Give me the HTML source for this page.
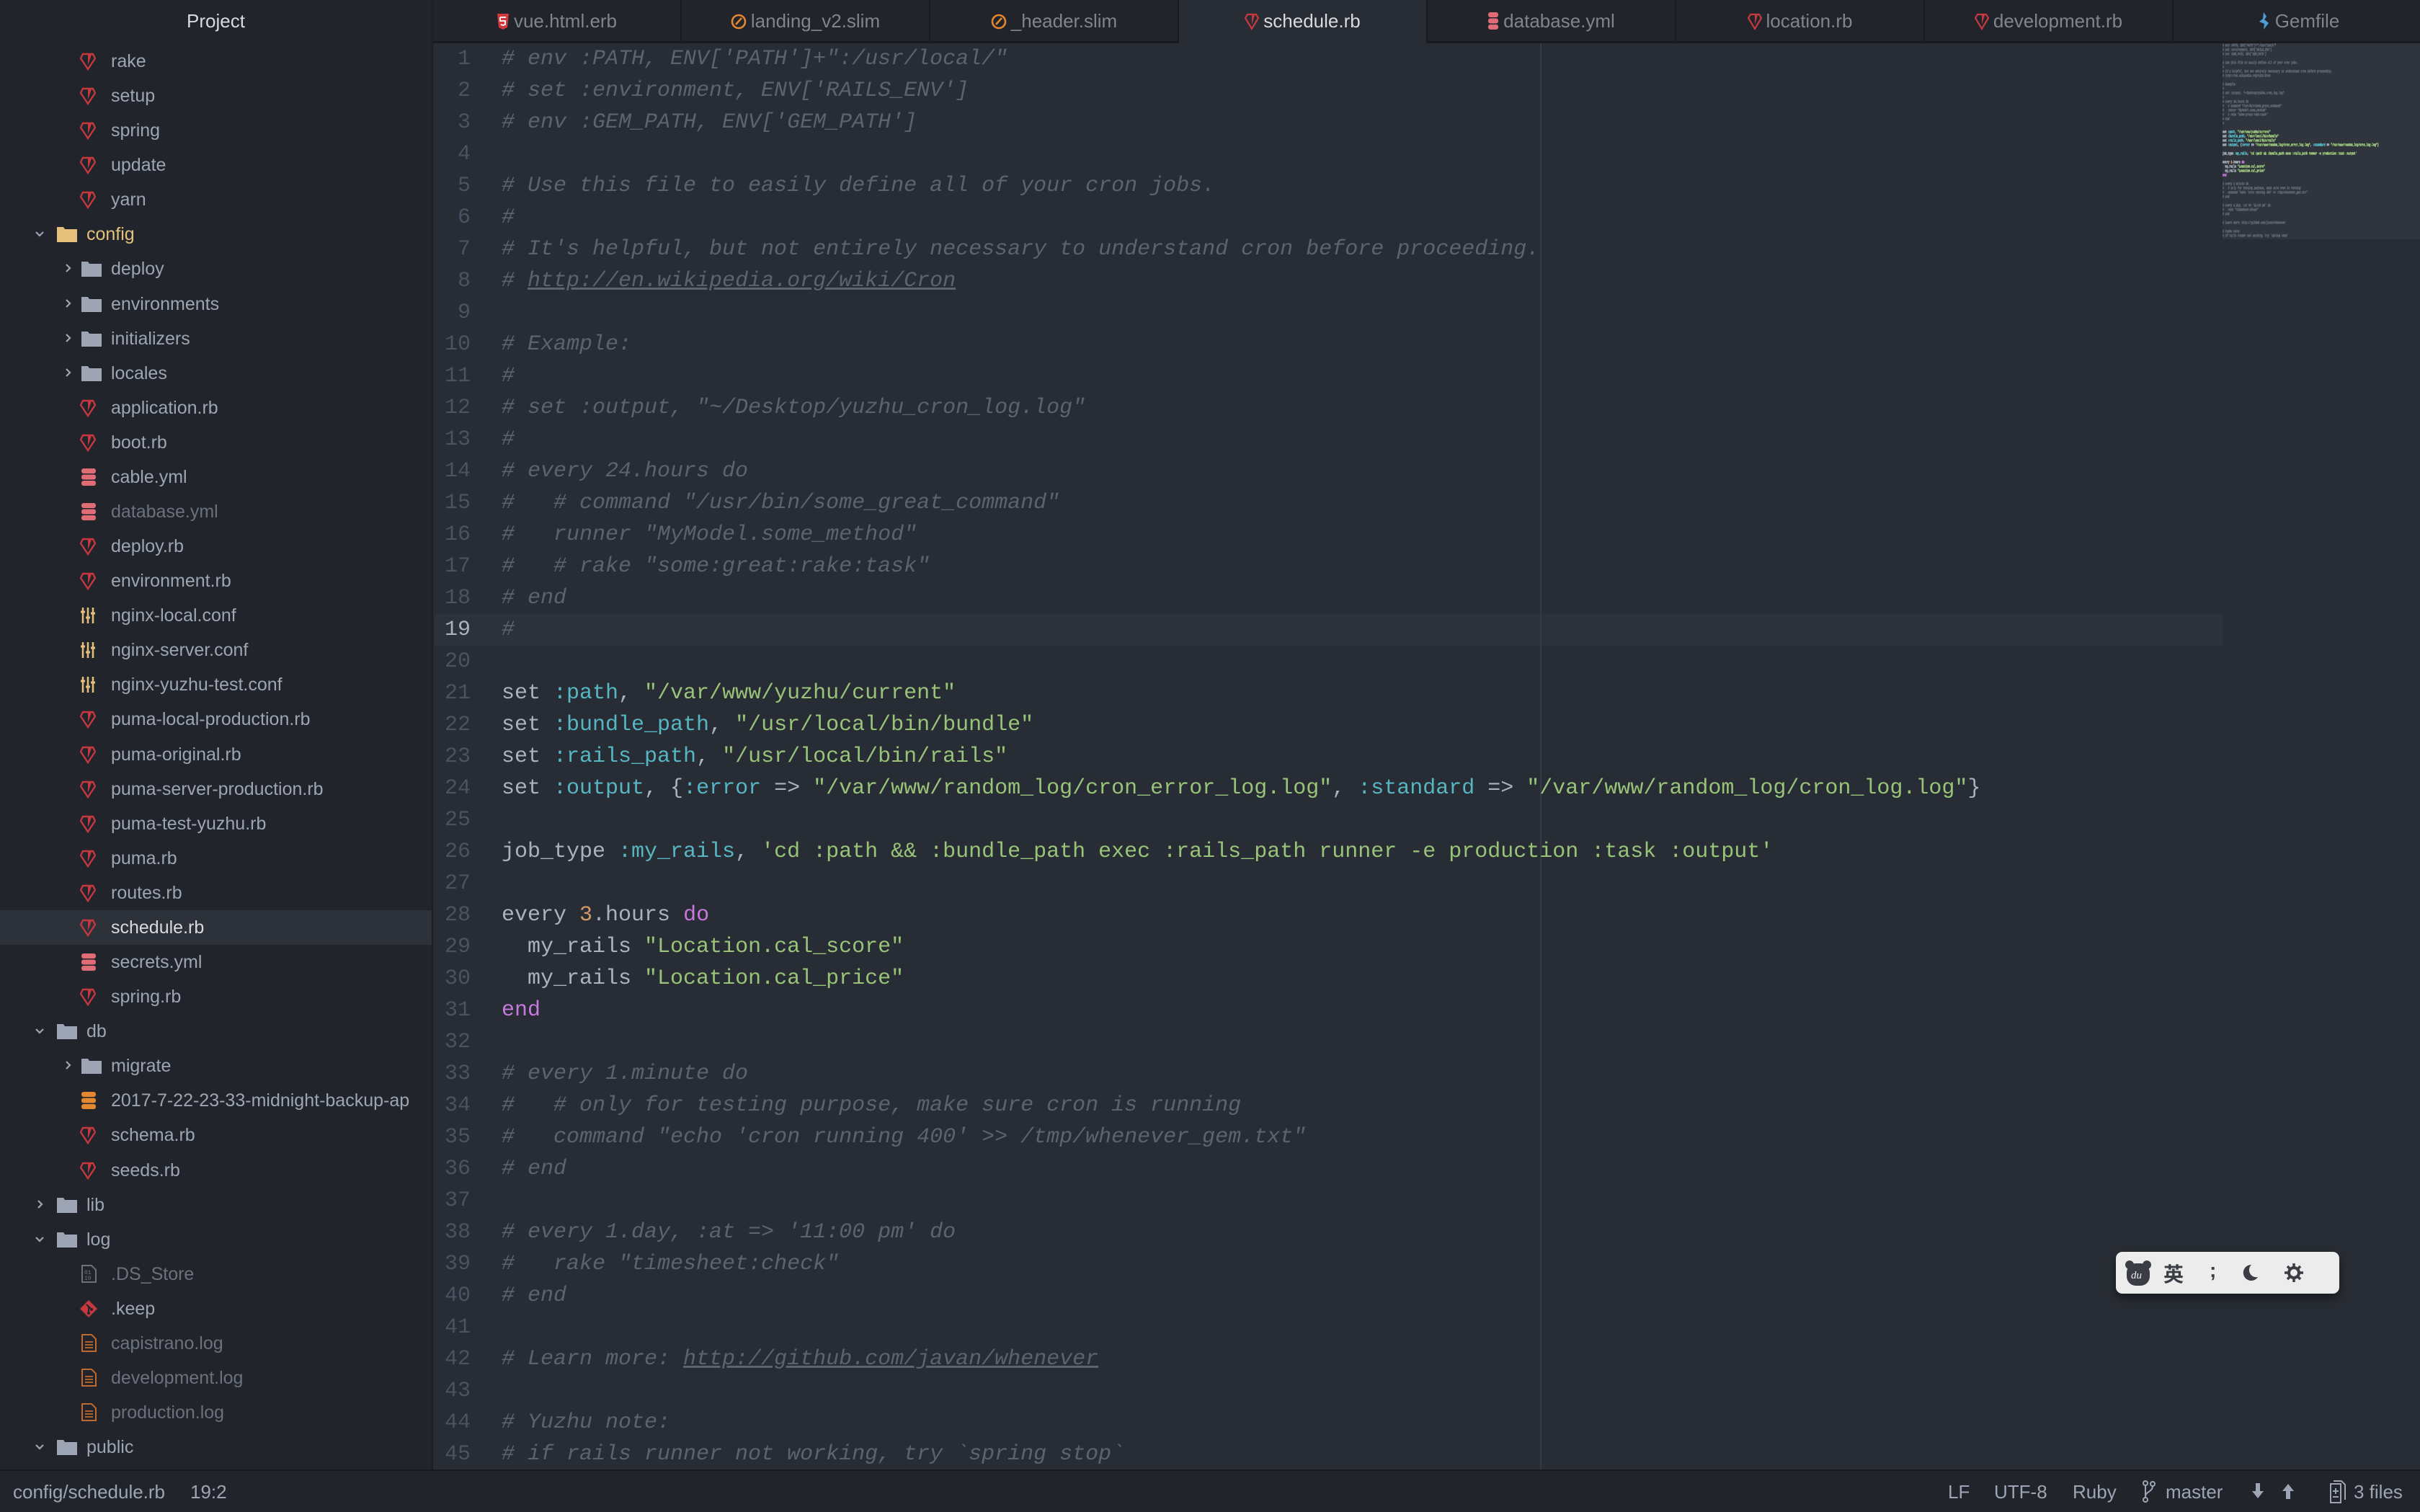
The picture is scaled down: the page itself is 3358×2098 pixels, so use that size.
<!DOCTYPE html>
<html><head><meta charset="utf-8">
<style>
*{margin:0;padding:0;box-sizing:border-box}
html,body{width:3358px;height:2098px;overflow:hidden;background:#282c34;font-family:"Liberation Sans","Noto Sans CJK SC",sans-serif}
#side{position:absolute;left:0;top:0;width:601px;height:2039px;background:#21252b;border-right:2px solid #1b1e23;overflow:hidden}
#side .hd{height:60px;line-height:58px;text-align:center;color:#d7dae0;font-size:26px}
#side .list{position:absolute;top:61px;left:0;width:600px}
.r{position:relative;height:48.08px;color:#9da5b4;font-size:25px;white-space:nowrap}
.r span.t{position:absolute;top:9px;line-height:30px}
.r svg{position:absolute}
.r.sel{background:#2c313a;color:#d7dae0}
.r.dim{color:#6b717d}
.r.cfg{color:#e5c07b}
#tabs{position:absolute;left:601px;top:0;width:2757px;height:60px;background:#21252b;border-bottom:3px solid #181a1f}
.tab{position:absolute;top:0;height:57px;width:345px;border-right:2px solid #181a1f;color:#7f848e;font-size:26px;text-align:center;line-height:58px}
.tab.act{background:#282c34;color:#d7dae0;height:60px}
.tab svg{vertical-align:-4px;margin-right:6px}
#ed{position:absolute;left:603px;top:60px;width:2755px;height:1979px;background:#282c34;overflow:hidden}
.cl{position:absolute;left:0;top:792px;width:2481px;height:44px;background:#2c313c}
.wrap{position:absolute;left:1534px;top:0;width:2px;height:1980px;background:#353a45}
pre{font-family:"Liberation Mono",monospace;font-size:30px;line-height:44px;color:#abb2bf}
#gut{position:absolute;left:0;top:0;width:50px;text-align:right;color:#4b5263}
#code{position:absolute;left:93px;top:0}
.c{color:#5c6370;font-style:italic}.u{text-decoration:underline}
.s{color:#98c379}.y{color:#56b6c2}.k{color:#c678dd}.n{color:#d19a66}
#mm{position:absolute;left:3084px;top:60px;width:274px;height:1979px;background:#282c34}
#mmv{position:absolute;left:0;top:0;width:274px;height:272px;background:#30343d}
#mmc{position:absolute;left:0;top:0;transform-origin:0 0;transform:scale(0.1056,0.1364)}
#mmc pre{font-weight:bold;text-shadow:0 0 0 currentColor,0 4px 0 currentColor,0 -4px 0 currentColor,0 8px 0 currentColor}
#st{position:absolute;left:0;top:2039px;width:3358px;height:59px;background:#21252b;border-top:2px solid #181a1f;color:#9da5b4;font-size:26px}
#st span{position:absolute;top:14px}
#ime{position:absolute;left:2936px;top:1737px;width:310px;height:58px;background:#ececec;border-radius:9px;box-shadow:0 6px 14px rgba(0,0,0,.45)}
#ime span{position:absolute;top:10px;font-size:28px;color:#3a3d44;font-weight:bold}
</style></head><body>

<svg width="0" height="0" style="position:absolute">
<defs>
<g id="ruby"><path d="M4 2h14l3 6-10 15L1 8z" fill="none" stroke="#c5383e" stroke-width="2.4"/><path d="M11 3l5 0 -5 14z" fill="#c5383e"/></g>
<g id="fold"><path d="M0 2h9l2 3h17v18H0z" fill="#9da5b4"/></g>
<g id="foldy"><path d="M0 2h9l2 3h17v18H0z" fill="#e5c07b"/></g>
<g id="db"><rect x="1" y="1" width="20" height="7" rx="3" fill="#e06c75"/><rect x="1" y="9.5" width="20" height="7" rx="3" fill="#e06c75"/><rect x="1" y="18" width="20" height="7" rx="3" fill="#e06c75"/></g>
<g id="dbo"><rect x="1" y="1" width="20" height="7" rx="3" fill="#e5872e"/><rect x="1" y="9.5" width="20" height="7" rx="3" fill="#e5872e"/><rect x="1" y="18" width="20" height="7" rx="3" fill="#e5872e"/></g>
<g id="conf" stroke="#e5c07b" stroke-width="2.5"><path d="M4 1v22M11 1v22M18 1v22"/><path d="M1 7h6M8 15h6M15 9h6" stroke-width="3"/></g>
<g id="log"><path d="M2 1h13l6 6v17H2z" fill="none" stroke="#c0682e" stroke-width="2"/><path d="M6 11h11M6 15h11M6 19h11" stroke="#c0682e" stroke-width="1.8"/></g>
<g id="bin"><path d="M2 1h13l6 6v17H2z" fill="none" stroke="#6b717d" stroke-width="2"/><text x="5" y="13" font-size="8" fill="#6b717d" font-family="Liberation Mono">01</text><text x="5" y="21" font-size="8" fill="#6b717d" font-family="Liberation Mono">10</text></g>
<g id="git"><path d="M12 0l12 12-12 12L0 12z" fill="#c5383e"/><path d="M9 6l7 7M12 9v9" stroke="#21252b" stroke-width="2"/><circle cx="12" cy="18" r="2" fill="#21252b"/><circle cx="16" cy="13" r="2" fill="#21252b"/></g>
<g id="chd"><path d="M1 2l5 5 5-5" fill="none" stroke="#9da5b4" stroke-width="2.2"/></g>
<g id="chr"><path d="M2 1l5 5-5 5" fill="none" stroke="#9da5b4" stroke-width="2.2"/></g>
</defs></svg>

<div id="side">
<div class="hd">Project</div>
<div class="list">
<div class="r"><svg style="left:111px;top:12px" width="22" height="25"><use href="#ruby"/></svg><span class="t" style="left:154px">rake</span></div>
<div class="r"><svg style="left:111px;top:12px" width="22" height="25"><use href="#ruby"/></svg><span class="t" style="left:154px">setup</span></div>
<div class="r"><svg style="left:111px;top:12px" width="22" height="25"><use href="#ruby"/></svg><span class="t" style="left:154px">spring</span></div>
<div class="r"><svg style="left:111px;top:12px" width="22" height="25"><use href="#ruby"/></svg><span class="t" style="left:154px">update</span></div>
<div class="r"><svg style="left:111px;top:12px" width="22" height="25"><use href="#ruby"/></svg><span class="t" style="left:154px">yarn</span></div>
<div class="r cfg"><svg style="left:49px;top:19px" width="13" height="10"><use href="#chd"/></svg><svg style="left:79px;top:12px" width="28" height="24"><use href="#foldy"/></svg><span class="t" style="left:120px">config</span></div>
<div class="r"><svg style="left:90px;top:17px" width="10" height="13"><use href="#chr"/></svg><svg style="left:113px;top:12px" width="28" height="24"><use href="#fold"/></svg><span class="t" style="left:154px">deploy</span></div>
<div class="r"><svg style="left:90px;top:17px" width="10" height="13"><use href="#chr"/></svg><svg style="left:113px;top:12px" width="28" height="24"><use href="#fold"/></svg><span class="t" style="left:154px">environments</span></div>
<div class="r"><svg style="left:90px;top:17px" width="10" height="13"><use href="#chr"/></svg><svg style="left:113px;top:12px" width="28" height="24"><use href="#fold"/></svg><span class="t" style="left:154px">initializers</span></div>
<div class="r"><svg style="left:90px;top:17px" width="10" height="13"><use href="#chr"/></svg><svg style="left:113px;top:12px" width="28" height="24"><use href="#fold"/></svg><span class="t" style="left:154px">locales</span></div>
<div class="r"><svg style="left:111px;top:12px" width="22" height="25"><use href="#ruby"/></svg><span class="t" style="left:154px">application.rb</span></div>
<div class="r"><svg style="left:111px;top:12px" width="22" height="25"><use href="#ruby"/></svg><span class="t" style="left:154px">boot.rb</span></div>
<div class="r"><svg style="left:112px;top:11px" width="22" height="26"><use href="#db"/></svg><span class="t" style="left:154px">cable.yml</span></div>
<div class="r dim"><svg style="left:112px;top:11px" width="22" height="26"><use href="#db"/></svg><span class="t" style="left:154px">database.yml</span></div>
<div class="r"><svg style="left:111px;top:12px" width="22" height="25"><use href="#ruby"/></svg><span class="t" style="left:154px">deploy.rb</span></div>
<div class="r"><svg style="left:111px;top:12px" width="22" height="25"><use href="#ruby"/></svg><span class="t" style="left:154px">environment.rb</span></div>
<div class="r"><svg style="left:111px;top:12px" width="22" height="24"><use href="#conf"/></svg><span class="t" style="left:154px">nginx-local.conf</span></div>
<div class="r"><svg style="left:111px;top:12px" width="22" height="24"><use href="#conf"/></svg><span class="t" style="left:154px">nginx-server.conf</span></div>
<div class="r"><svg style="left:111px;top:12px" width="22" height="24"><use href="#conf"/></svg><span class="t" style="left:154px">nginx-yuzhu-test.conf</span></div>
<div class="r"><svg style="left:111px;top:12px" width="22" height="25"><use href="#ruby"/></svg><span class="t" style="left:154px">puma-local-production.rb</span></div>
<div class="r"><svg style="left:111px;top:12px" width="22" height="25"><use href="#ruby"/></svg><span class="t" style="left:154px">puma-original.rb</span></div>
<div class="r"><svg style="left:111px;top:12px" width="22" height="25"><use href="#ruby"/></svg><span class="t" style="left:154px">puma-server-production.rb</span></div>
<div class="r"><svg style="left:111px;top:12px" width="22" height="25"><use href="#ruby"/></svg><span class="t" style="left:154px">puma-test-yuzhu.rb</span></div>
<div class="r"><svg style="left:111px;top:12px" width="22" height="25"><use href="#ruby"/></svg><span class="t" style="left:154px">puma.rb</span></div>
<div class="r"><svg style="left:111px;top:12px" width="22" height="25"><use href="#ruby"/></svg><span class="t" style="left:154px">routes.rb</span></div>
<div class="r sel"><svg style="left:111px;top:12px" width="22" height="25"><use href="#ruby"/></svg><span class="t" style="left:154px">schedule.rb</span></div>
<div class="r"><svg style="left:112px;top:11px" width="22" height="26"><use href="#db"/></svg><span class="t" style="left:154px">secrets.yml</span></div>
<div class="r"><svg style="left:111px;top:12px" width="22" height="25"><use href="#ruby"/></svg><span class="t" style="left:154px">spring.rb</span></div>
<div class="r"><svg style="left:49px;top:19px" width="13" height="10"><use href="#chd"/></svg><svg style="left:79px;top:12px" width="28" height="24"><use href="#fold"/></svg><span class="t" style="left:120px">db</span></div>
<div class="r"><svg style="left:90px;top:17px" width="10" height="13"><use href="#chr"/></svg><svg style="left:113px;top:12px" width="28" height="24"><use href="#fold"/></svg><span class="t" style="left:154px">migrate</span></div>
<div class="r"><svg style="left:112px;top:11px" width="22" height="26"><use href="#dbo"/></svg><span class="t" style="left:154px">2017-7-22-23-33-midnight-backup-ap</span></div>
<div class="r"><svg style="left:111px;top:12px" width="22" height="25"><use href="#ruby"/></svg><span class="t" style="left:154px">schema.rb</span></div>
<div class="r"><svg style="left:111px;top:12px" width="22" height="25"><use href="#ruby"/></svg><span class="t" style="left:154px">seeds.rb</span></div>
<div class="r"><svg style="left:51px;top:17px" width="10" height="13"><use href="#chr"/></svg><svg style="left:79px;top:12px" width="28" height="24"><use href="#fold"/></svg><span class="t" style="left:120px">lib</span></div>
<div class="r"><svg style="left:49px;top:19px" width="13" height="10"><use href="#chd"/></svg><svg style="left:79px;top:12px" width="28" height="24"><use href="#fold"/></svg><span class="t" style="left:120px">log</span></div>
<div class="r dim"><svg style="left:112px;top:11px" width="23" height="26"><use href="#bin"/></svg><span class="t" style="left:154px">.DS_Store</span></div>
<div class="r"><svg style="left:111px;top:12px" width="24" height="24"><use href="#git"/></svg><span class="t" style="left:154px">.keep</span></div>
<div class="r dim"><svg style="left:112px;top:11px" width="23" height="26"><use href="#log"/></svg><span class="t" style="left:154px">capistrano.log</span></div>
<div class="r dim"><svg style="left:112px;top:11px" width="23" height="26"><use href="#log"/></svg><span class="t" style="left:154px">development.log</span></div>
<div class="r dim"><svg style="left:112px;top:11px" width="23" height="26"><use href="#log"/></svg><span class="t" style="left:154px">production.log</span></div>
<div class="r"><svg style="left:49px;top:19px" width="13" height="10"><use href="#chd"/></svg><svg style="left:79px;top:12px" width="28" height="24"><use href="#fold"/></svg><span class="t" style="left:120px">public</span></div>
</div>
</div>

<div id="tabs">
<div class="tab" style="left:0"><svg width="18" height="24"><path d="M1 1h16l-2 19-6 3-6-3z" fill="#d0393e"/><path d="M5 6h8M5 6v5h7v5l-3 1-3-1" fill="none" stroke="#fff" stroke-width="1.8"/></svg>vue.html.erb</div>
<div class="tab" style="left:345px"><svg width="22" height="24"><circle cx="11" cy="12" r="9" fill="none" stroke="#e5872e" stroke-width="2.6"/><path d="M7 16l8-9" stroke="#e5872e" stroke-width="2.6"/></svg>landing_v2.slim</div>
<div class="tab" style="left:690px"><svg width="22" height="24"><circle cx="11" cy="12" r="9" fill="none" stroke="#e5872e" stroke-width="2.6"/><path d="M7 16l8-9" stroke="#e5872e" stroke-width="2.6"/></svg>_header.slim</div>
<div class="tab act" style="left:1035px"><svg width="20" height="24"><path d="M4 2h12l3 5-9 15L1 7z" fill="none" stroke="#c5383e" stroke-width="2.2"/><path d="M10 3h4l-4 13z" fill="#c5383e"/></svg>schedule.rb</div>
<div class="tab" style="left:1380px"><svg width="16" height="26"><rect x="1" y="1" width="14" height="7" rx="3" fill="#e06c75"/><rect x="1" y="9.5" width="14" height="7" rx="3" fill="#e06c75"/><rect x="1" y="18" width="14" height="7" rx="3" fill="#e06c75"/></svg>database.yml</div>
<div class="tab" style="left:1725px"><svg width="20" height="24"><path d="M4 2h12l3 5-9 15L1 7z" fill="none" stroke="#c5383e" stroke-width="2.2"/><path d="M10 3h4l-4 13z" fill="#c5383e"/></svg>location.rb</div>
<div class="tab" style="left:2070px"><svg width="20" height="24"><path d="M4 2h12l3 5-9 15L1 7z" fill="none" stroke="#c5383e" stroke-width="2.2"/><path d="M10 3h4l-4 13z" fill="#c5383e"/></svg>development.rb</div>
<div class="tab" style="left:2415px;border-right:none"><svg width="20" height="26"><path d="M10 1l4 6-3 4 6 5-7 9 1-8-7-3 5-4z" fill="#4c9fd6"/></svg>Gemfile</div>
</div>

<div id="ed">
<div class="cl"></div>
<div class="wrap"></div>
<pre id="gut">1
2
3
4
5
6
7
8
9
10
11
12
13
14
15
16
17
18
<span style="color:#abb2bf">19</span>
20
21
22
23
24
25
26
27
28
29
30
31
32
33
34
35
36
37
38
39
40
41
42
43
44
45</pre>
<pre id="code"><span class="c"># env :PATH, ENV['PATH']+":/usr/local/"</span>
<span class="c"># set :environment, ENV['RAILS_ENV']</span>
<span class="c"># env :GEM_PATH, ENV['GEM_PATH']</span>

<span class="c"># Use this file to easily define all of your cron jobs.</span>
<span class="c">#</span>
<span class="c"># It's helpful, but not entirely necessary to understand cron before proceeding.</span>
<span class="c"># <span class="u">http://en.wikipedia.org/wiki/Cron</span></span>

<span class="c"># Example:</span>
<span class="c">#</span>
<span class="c"># set :output, "~/Desktop/yuzhu_cron_log.log"</span>
<span class="c">#</span>
<span class="c"># every 24.hours do</span>
<span class="c">#   # command "/usr/bin/some_great_command"</span>
<span class="c">#   runner "MyModel.some_method"</span>
<span class="c">#   # rake "some:great:rake:task"</span>
<span class="c"># end</span>
<span class="c">#</span>

set <span class="y">:path</span>, <span class="s">"/var/www/yuzhu/current"</span>
set <span class="y">:bundle_path</span>, <span class="s">"/usr/local/bin/bundle"</span>
set <span class="y">:rails_path</span>, <span class="s">"/usr/local/bin/rails"</span>
set <span class="y">:output</span>, {<span class="y">:error</span> =&gt; <span class="s">"/var/www/random_log/cron_error_log.log"</span>, <span class="y">:standard</span> =&gt; <span class="s">"/var/www/random_log/cron_log.log"</span>}

job_type <span class="y">:my_rails</span>, <span class="s">'cd :path &amp;&amp; :bundle_path exec :rails_path runner -e production :task :output'</span>

every <span class="n">3</span>.hours <span class="k">do</span>
  my_rails <span class="s">"Location.cal_score"</span>
  my_rails <span class="s">"Location.cal_price"</span>
<span class="k">end</span>

<span class="c"># every 1.minute do</span>
<span class="c">#   # only for testing purpose, make sure cron is running</span>
<span class="c">#   command "echo 'cron running 400' &gt;&gt; /tmp/whenever_gem.txt"</span>
<span class="c"># end</span>

<span class="c"># every 1.day, :at =&gt; '11:00 pm' do</span>
<span class="c">#   rake "timesheet:check"</span>
<span class="c"># end</span>

<span class="c"># Learn more: <span class="u">http://github.com/javan/whenever</span></span>

<span class="c"># Yuzhu note:</span>
<span class="c"># if rails runner not working, try `spring stop`</span></pre>
</div>

<div id="mm"><div id="mmv"></div>
<div id="mmc"><pre><span class="c"># env :PATH, ENV['PATH']+":/usr/local/"</span>
<span class="c"># set :environment, ENV['RAILS_ENV']</span>
<span class="c"># env :GEM_PATH, ENV['GEM_PATH']</span>

<span class="c"># Use this file to easily define all of your cron jobs.</span>
<span class="c">#</span>
<span class="c"># It's helpful, but not entirely necessary to understand cron before proceeding.</span>
<span class="c"># http://en.wikipedia.org/wiki/Cron</span>

<span class="c"># Example:</span>
<span class="c">#</span>
<span class="c"># set :output, "~/Desktop/yuzhu_cron_log.log"</span>
<span class="c">#</span>
<span class="c"># every 24.hours do</span>
<span class="c">#   # command "/usr/bin/some_great_command"</span>
<span class="c">#   runner "MyModel.some_method"</span>
<span class="c">#   # rake "some:great:rake:task"</span>
<span class="c"># end</span>
<span class="c">#</span>

set <span class="y">:path</span>, <span class="s">"/var/www/yuzhu/current"</span>
set <span class="y">:bundle_path</span>, <span class="s">"/usr/local/bin/bundle"</span>
set <span class="y">:rails_path</span>, <span class="s">"/usr/local/bin/rails"</span>
set <span class="y">:output</span>, {<span class="y">:error</span> =&gt; <span class="s">"/var/www/random_log/cron_error_log.log"</span>, <span class="y">:standard</span> =&gt; <span class="s">"/var/www/random_log/cron_log.log"</span>}

job_type <span class="y">:my_rails</span>, <span class="s">'cd :path &amp;&amp; :bundle_path exec :rails_path runner -e production :task :output'</span>

every <span class="n">3</span>.hours <span class="k">do</span>
  my_rails <span class="s">"Location.cal_score"</span>
  my_rails <span class="s">"Location.cal_price"</span>
<span class="k">end</span>

<span class="c"># every 1.minute do</span>
<span class="c">#   # only for testing purpose, make sure cron is running</span>
<span class="c">#   command "echo 'cron running 400' &gt;&gt; /tmp/whenever_gem.txt"</span>
<span class="c"># end</span>

<span class="c"># every 1.day, :at =&gt; '11:00 pm' do</span>
<span class="c">#   rake "timesheet:check"</span>
<span class="c"># end</span>

<span class="c"># Learn more: http://github.com/javan/whenever</span>

<span class="c"># Yuzhu note:</span>
<span class="c"># if rails runner not working, try `spring stop`</span></pre></div>
</div>

<div id="ime">
<svg style="position:absolute;left:12px;top:11px" width="38" height="38" viewBox="0 0 38 38"><circle cx="7" cy="7" r="6" fill="#3a3d44"/><circle cx="31" cy="7" r="6" fill="#3a3d44"/><rect x="3" y="5" width="32" height="31" rx="13" fill="#3a3d44"/><text x="9" y="26" font-size="15" font-style="italic" fill="#ececec" font-family="Liberation Serif">du</text></svg>
<span style="left:66px;font-family:'Noto Sans CJK SC',sans-serif">英</span>
<span style="left:130px">;</span>
<svg style="position:absolute;left:170px;top:16px" width="30" height="28"><path d="M18 2a11 11 0 1 0 9 17a10 10 0 0 1-9-17z" fill="#3a3d44"/></svg>
<svg style="position:absolute;left:232px;top:14px" width="30" height="30" viewBox="0 0 30 30"><circle cx="15" cy="15" r="7" fill="none" stroke="#3a3d44" stroke-width="4"/><path d="M15 2v6M15 22v6M2 15h6M22 15h6M6 6l4 4M20 20l4 4M24 6l-4 4M6 24l4-4" stroke="#3a3d44" stroke-width="3.5"/></svg>
</div>

<div id="st">
<span style="left:18px">config/schedule.rb</span>
<span style="left:264px">19:2</span>
<span style="left:2703px">LF</span>
<span style="left:2767px">UTF-8</span>
<span style="left:2876px">Ruby</span>
<svg style="position:absolute;left:2973px;top:13px" width="18" height="32"><circle cx="4" cy="4" r="3" fill="none" stroke="#9da5b4" stroke-width="2"/><circle cx="4" cy="27" r="3" fill="none" stroke="#9da5b4" stroke-width="2"/><circle cx="14" cy="5" r="3" fill="none" stroke="#9da5b4" stroke-width="2"/><path d="M4 7v17M14 8c0 8-10 8-10 14" fill="none" stroke="#9da5b4" stroke-width="2"/></svg>
<span style="left:3005px">master</span>
<svg style="position:absolute;left:3124px;top:16px" width="18" height="24"><path d="M6 1h6v11h5L9 22 1 12h5z" fill="#9da5b4"/></svg>
<svg style="position:absolute;left:3166px;top:16px" width="18" height="24"><path d="M6 23h6V12h5L9 2 1 12h5z" fill="#9da5b4"/></svg>
<svg style="position:absolute;left:3232px;top:12px" width="24" height="34"><path d="M2 6h14v26H2z" fill="none" stroke="#9da5b4" stroke-width="2"/><path d="M6 2h11l5 5v21" fill="none" stroke="#9da5b4" stroke-width="2"/><path d="M9 12v8M5 16h8M5 24h8" stroke="#9da5b4" stroke-width="2"/></svg>
<span style="left:3266px">3 files</span>
</div>
</body></html>
